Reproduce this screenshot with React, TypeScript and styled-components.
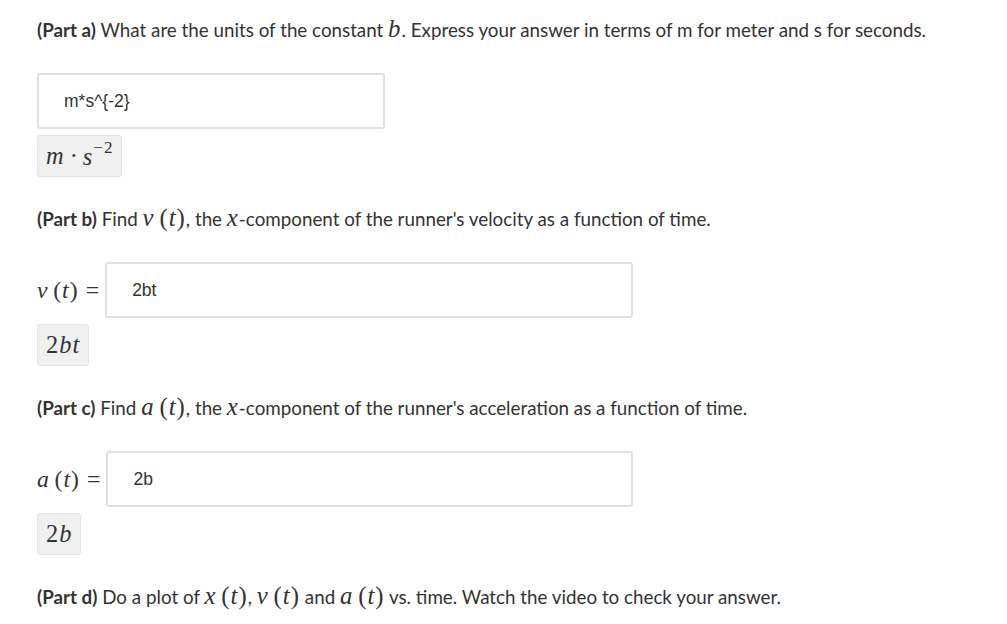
import React from "react";
import styled, { createGlobalStyle } from "styled-components";

const Global = createGlobalStyle`
  html, body { margin: 0; padding: 0; background: #fff; }
  body { font-family: Lato, "Open Sans", sans-serif; color: #333; }
`;

const Page = styled.div`
  padding: 16px 37px 0 37px;
`;

const Section = styled.section`
  display: flex;
  flex-direction: column;
  align-items: flex-start;
  gap: 6px;
  margin-bottom: 28px;
  &:last-child {
    margin-bottom: 0;
  }
`;

const Question = styled.p`
  margin: 0 0 24px 0;
  font-size: 18.8px;
  line-height: 27px;
  white-space: nowrap;
  &:last-child {
    margin-bottom: 0;
  }
`;

const Part = styled.b`
  font-weight: 700;
`;

const M = styled.span<{ upright?: boolean }>`
  font-family: "Liberation Serif", "DejaVu Serif", serif;
  font-style: ${(p) => (p.upright ? "normal" : "italic")};
  font-size: 1.32em;
  line-height: 1;
  letter-spacing: 1px;
`;

const Sup = styled.sup`
  font-size: 0.7em;
  font-style: normal;
  position: relative;
  top: -0.2em;
`;

const AnswerRow = styled.div`
  display: flex;
  align-items: center;
  gap: 6px;
`;

const Label = styled.span`
  font-size: 18px;
  white-space: nowrap;
`;

const Eq = styled.span`
  font-family: "Liberation Serif", "DejaVu Serif", serif;
  font-size: 1.32em;
  margin-left: 0.3em;
`;

const Input = styled.div<{ w: number }>`
  box-sizing: border-box;
  width: ${(p) => p.w}px;
  height: 56px;
  border: 2px solid #e0e0e0;
  border-radius: 3px;
  display: flex;
  align-items: center;
  padding-left: 25px;
  font-family: "Liberation Sans", Arial, sans-serif;
  font-size: 17.5px;
  color: #333;
`;

const Preview = styled.div`
  box-sizing: border-box;
  height: 42px;
  display: flex;
  align-items: center;
  padding: 0 8px;
  background: #f0f0f0;
  border: 1px solid #e4e4e4;
  border-radius: 3px;
  font-size: 18.5px;
  color: #333;
`;

const Dot = styled.span`
  font-family: "Liberation Serif", "DejaVu Serif", serif;
  font-size: 1.32em;
  margin: 0 5px;
`;

export default function App() {
  return (
    <>
      <Global />
      <Page>
        <Section>
          <Question>
            <Part>(Part a)</Part> What are the units of the constant <M>b</M>. Express your answer in terms of m for meter and s for seconds.
          </Question>
          <Input w={348}>m*s^&#123;-2&#125;</Input>
          <Preview>
            <M>m</M>
            <Dot>·</Dot>
            <M>
              s<Sup>−2</Sup>
            </M>
          </Preview>
        </Section>
        <Section>
          <Question>
            <Part>(Part b)</Part> Find <M>v</M> <M upright>(</M><M>t</M><M upright>)</M>, the <M>x</M>-component of the runner's velocity as a function of time.
          </Question>
          <AnswerRow>
            <Label>
              <M>v</M> <M upright>(</M><M>t</M><M upright>)</M><Eq>=</Eq>
            </Label>
            <Input w={528}>2bt</Input>
          </AnswerRow>
          <Preview>
            <M upright>2</M>
            <M>bt</M>
          </Preview>
        </Section>
        <Section>
          <Question>
            <Part>(Part c)</Part> Find <M>a</M> <M upright>(</M><M>t</M><M upright>)</M>, the <M>x</M>-component of the runner's acceleration as a function of time.
          </Question>
          <AnswerRow>
            <Label>
              <M>a</M> <M upright>(</M><M>t</M><M upright>)</M><Eq>=</Eq>
            </Label>
            <Input w={527}>2b</Input>
          </AnswerRow>
          <Preview>
            <M upright>2</M>
            <M>b</M>
          </Preview>
        </Section>
        <Section>
          <Question>
            <Part>(Part d)</Part> Do a plot of <M>x</M> <M upright>(</M><M>t</M><M upright>)</M>, <M>v</M> <M upright>(</M><M>t</M><M upright>)</M> and <M>a</M> <M upright>(</M><M>t</M><M upright>)</M> vs. time. Watch the video to check your answer.
          </Question>
        </Section>
      </Page>
    </>
  );
}
